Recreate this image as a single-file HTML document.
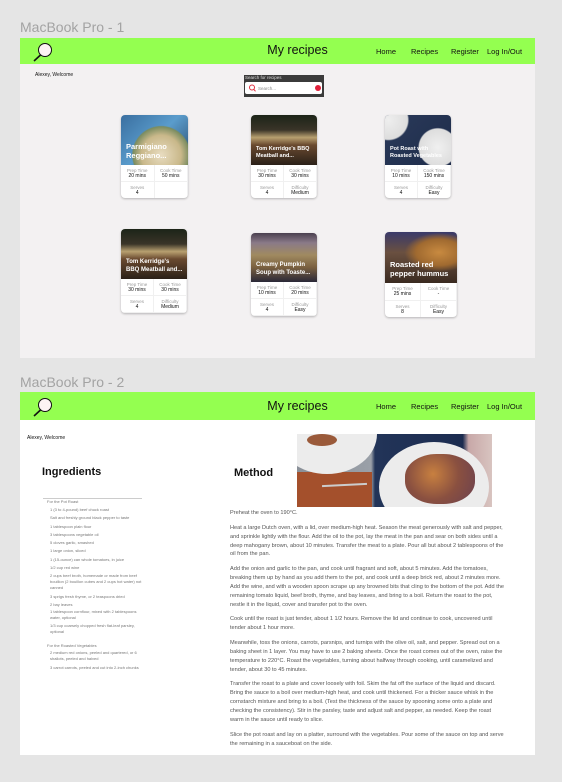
<!DOCTYPE html>
<html><head><meta charset="utf-8"><style>
*{margin:0;padding:0;box-sizing:border-box}
body{width:562px;height:782px;background:#e5e5e5;position:relative;overflow:hidden;font-family:"Liberation Sans",sans-serif;color:#222}
.abs{position:absolute}
.lbl{font-size:14px;color:#a3a3a3;left:20px}
.frame{position:absolute;left:20px;width:515px}
.hdr{position:absolute;left:0;top:0;width:515px;background:#94ff50}
.title{position:absolute;left:0;width:515px;text-align:center;font-size:12.5px;color:#111;padding-left:40px}
.nav{position:absolute;font-size:7.5px;color:#111}
.card{position:absolute;background:#fff;border-radius:4px;overflow:hidden;box-shadow:0 1px 2px rgba(0,0,0,.25)}
.img{position:relative;width:100%}
.img span{position:absolute;left:5px;bottom:5px;right:4px;color:#fff;font-weight:bold;font-size:7px;line-height:8px}
.st{display:grid;grid-template-columns:1fr 1fr;font-size:4.5px;text-align:center}
.st div{height:17px;padding-top:3px;border-right:1px solid #f0f0f0;border-bottom:1px solid #f0f0f0;color:#999;line-height:5.5px}
.st b{display:block;font-weight:normal;color:#111;font-size:5px}
.ing{position:absolute;left:50px;font-size:4px;color:#777;line-height:6px;width:95px}
.m{position:absolute;left:230px;width:274px;font-size:5.6px;line-height:8.9px;color:#555}
.m p{margin-bottom:5.8px}
</style></head><body>
<div class="abs lbl" style="top:19px">MacBook Pro - 1</div>
<div class="frame" style="top:38px;height:320px;background:#f3f1f2">
 <div class="hdr" style="height:26px"></div>
 <svg class="abs" style="left:12px;top:2px" width="24" height="24"><circle cx="13" cy="10" r="6.5" fill="#fdf3f3" stroke="#111" stroke-width="1"/><line x1="8.5" y1="15" x2="2" y2="21" stroke="#111" stroke-width="1.6"/></svg>
 <div class="title" style="top:5px">My recipes</div>
 <div class="nav" style="left:356px;top:9px">Home</div>
 <div class="nav" style="left:391px;top:9px">Recipes</div>
 <div class="nav" style="left:431px;top:9px">Register</div>
 <div class="nav" style="left:467px;top:9px">Log In/Out</div>
 <div class="abs" style="left:15px;top:34px;font-size:5px;color:#111">Alexey, Welcome</div>
 <div class="abs" style="left:224px;top:37px;width:80px;height:22px;background:#3b3b3b">
  <div class="abs" style="left:1px;top:0;font-size:4.5px;color:#ddd">Search for recipes</div>
  <div class="abs" style="left:1px;top:7px;width:77px;height:12px;background:#fff;border-radius:2px">
   <svg class="abs" style="left:3px;top:2px" width="8" height="8"><circle cx="4" cy="3.5" r="2.5" fill="none" stroke="#e03040" stroke-width="1"/><line x1="5.8" y1="5.3" x2="7.5" y2="7.3" stroke="#e03040" stroke-width="1"/></svg>
   <div class="abs" style="left:13px;top:3.5px;font-size:4.5px;color:#888">Search...</div>
   <div class="abs" style="left:70px;top:3px;width:6px;height:6px;border-radius:50%;background:#e0203a"></div>
  </div>
 </div>
 <div class="card" style="left:101px;top:77px;width:67px;height:83px"><div class="img" style="height:50px;background:radial-gradient(circle at 60% 80%,#e8dcc0 0,#c9b88a 35%,#7a8c60 50%,transparent 52%),linear-gradient(135deg,#3a6fa0,#5a9ccc 50%,#2a4a6a)"><span style="font-size:7.5px;line-height:9px">Parmigiano Reggiano...</span></div>
  <div class="st"><div>Prep Time<b>20 mins</b></div><div>Cook Time<b>50 mins</b></div><div>Serves<b>4</b></div><div></div></div></div>
 <div class="card" style="left:231px;top:77px;width:66px;height:83px"><div class="img" style="height:50px;background:linear-gradient(180deg,#1c2418 0,#3a3428 30%,#b8a070 45%,#6a4a30 60%,#2a2018 100%)"><span style="font-size:5.5px;line-height:7px">Tom Kerridge's BBQ Meatball and...</span></div>
  <div class="st"><div>Prep Time<b>30 mins</b></div><div>Cook Time<b>30 mins</b></div><div>Serves<b>4</b></div><div>Difficulty<b>Medium</b></div></div></div>
 <div class="card" style="left:365px;top:77px;width:66px;height:83px"><div class="img" style="height:50px;background:radial-gradient(circle at 80% 65%,#f0f0f0 0,#ddd 30%,transparent 32%),radial-gradient(circle at 5% 10%,#eee 0,#ddd 25%,transparent 27%),linear-gradient(135deg,#2a3a5a,#1e2c4a)"><span style="font-size:5.5px;line-height:7px">Pot Roast with Roasted Vegetables</span></div>
  <div class="st"><div>Prep Time<b>10 mins</b></div><div>Cook Time<b>150 mins</b></div><div>Serves<b>4</b></div><div>Difficulty<b>Easy</b></div></div></div>
 <div class="card" style="left:101px;top:191px;width:66px;height:84px"><div class="img" style="height:50px;background:linear-gradient(180deg,#1c2418 0,#3a3428 30%,#b8a070 45%,#6a4a30 60%,#2a2018 100%)"><span style="font-size:6px;line-height:7.5px">Tom Kerridge's BBQ Meatball and...</span></div>
  <div class="st"><div>Prep Time<b>30 mins</b></div><div>Cook Time<b>30 mins</b></div><div>Serves<b>4</b></div><div>Difficulty<b>Medium</b></div></div></div>
 <div class="card" style="left:231px;top:195px;width:66px;height:83px"><div class="img" style="height:49px;background:linear-gradient(180deg,#4a4050 0,#8a7a88 20%,#a08a60 45%,#7a6040 70%,#2a2838 100%)"><span style="font-size:6px;line-height:7.5px">Creamy Pumpkin Soup with Toaste...</span></div>
  <div class="st"><div>Prep Time<b>10 mins</b></div><div>Cook Time<b>20 mins</b></div><div>Serves<b>4</b></div><div>Difficulty<b>Easy</b></div></div></div>
 <div class="card" style="left:365px;top:194px;width:72px;height:85px"><div class="img" style="height:51px;background:radial-gradient(ellipse at 75% 40%,#c88a40 0,#a06a30 30%,transparent 45%),linear-gradient(180deg,#3a3a6a,#6a5040 40%,#3a2a20)"><span style="font-size:7.5px;line-height:9px">Roasted red pepper hummus</span></div>
  <div class="st"><div style="height:18px">Prep Time<b>25 mins</b></div><div style="height:18px">Cook Time<b>-</b></div><div>Serves<b>8</b></div><div>Difficulty<b>Easy</b></div></div></div>
</div>

<div class="abs lbl" style="top:374px">MacBook Pro - 2</div>
<div class="frame" style="top:392px;height:363px;background:#fff">
 <div class="hdr" style="height:28px"></div>
 <svg class="abs" style="left:12px;top:3px" width="24" height="24"><circle cx="13" cy="10" r="6.5" fill="#fdf3f3" stroke="#111" stroke-width="1"/><line x1="8.5" y1="15" x2="2" y2="21" stroke="#111" stroke-width="1.6"/></svg>
 <div class="title" style="top:7px">My recipes</div>
 <div class="nav" style="left:356px;top:10px">Home</div>
 <div class="nav" style="left:391px;top:10px">Recipes</div>
 <div class="nav" style="left:431px;top:10px">Register</div>
 <div class="nav" style="left:467px;top:10px">Log In/Out</div>
 <div class="abs" style="left:7px;top:43px;font-size:5px;color:#111">Alexey, Welcome</div>
 <div class="abs" style="left:277px;top:42px;width:195px;height:73px;overflow:hidden;background:linear-gradient(90deg,#8a9098 0,#9aa0a8 38%,#223458 40%,#1c2c50 85%,#c8a8a8 88%,#d8c4c0)">
  <div class="abs" style="left:0;top:38px;width:75px;height:40px;background:#a4502c"></div>
  <div class="abs" style="left:-20px;top:-40px;width:100px;height:80px;border-radius:50%;background:#ececec"></div>
  <div class="abs" style="left:10px;top:0;width:30px;height:12px;border-radius:50%;background:#9a5a3a"></div>
  <div class="abs" style="left:82px;top:8px;width:110px;height:90px;border-radius:50%;background:#ececec"></div>
  <div class="abs" style="left:108px;top:20px;width:70px;height:50px;border-radius:45%;background:radial-gradient(circle at 40% 40%,#c88040,#8a5040 50%,#6a4050)"></div>
  <div class="abs" style="left:25px;top:50px;width:45px;height:2px;background:#ccc;transform:rotate(-3deg)"></div>
 </div>
 <div class="abs" style="left:22px;top:74px;font-size:11px;font-weight:bold;color:#111">Ingredients</div>
 <div class="abs" style="left:214px;top:75px;font-size:11px;font-weight:bold;color:#111">Method</div>
 <div class="abs" style="left:23px;top:106px;width:99px;height:1px;background:#ccc"></div>
 <div class="ing" style="left:27px;top:107px">For the Pot Roast</div>
 <div class="ing" style="top:114px;left:30px;line-height:8.3px">1 (3 to 4-pound) beef chuck roast<br>Salt and freshly ground black pepper to taste<br>1 tablespoon plain flour<br>3 tablespoons vegetable oil<br>5 cloves garlic, smashed<br>1 large onion, sliced<br>1 (15-ounce) can whole tomatoes, in juice<br>1/2 cup red wine</div>
 <div class="ing" style="top:181px;left:30px">2 cups beef broth, homemade or made from beef bouillon (2 bouillon cubes and 2 cups hot water) not canned</div>
 <div class="ing" style="top:201px;left:30px;line-height:8.3px">3 sprigs fresh thyme, or 2 teaspoons dried<br>2 bay leaves</div>
 <div class="ing" style="top:217px;left:30px">1 tablespoon cornflour, mixed with 2 tablespoons water, optional</div>
 <div class="ing" style="top:231px;left:30px">1/3 cup coarsely chopped fresh flat-leaf parsley, optional</div>
 <div class="ing" style="top:251px;left:27px">For the Roasted Vegetables</div>
 <div class="ing" style="top:258px;left:30px">2 medium red onions, peeled and quartered, or 6 shallots, peeled and halved</div>
 <div class="ing" style="top:273px;left:30px">3 carrot carrots, peeled and cut into 2-inch chunks</div>
 <div class="m" style="left:210px;top:117px">
 <p>Preheat the oven to 190°C.</p>
 <p>Heat a large Dutch oven, with a lid, over medium-high heat. Season the meat generously with salt and pepper, and sprinkle lightly with the flour. Add the oil to the pot, lay the meat in the pan and sear on both sides until a deep mahogany brown, about 10 minutes. Transfer the meat to a plate. Pour all but about 2 tablespoons of the oil from the pan.</p>
 <p>Add the onion and garlic to the pan, and cook until fragrant and soft, about 5 minutes. Add the tomatoes, breaking them up by hand as you add them to the pot, and cook until a deep brick red, about 2 minutes more. Add the wine, and with a wooden spoon scrape up any browned bits that cling to the bottom of the pot. Add the remaining tomato liquid, beef broth, thyme, and bay leaves, and bring to a boil. Return the roast to the pot, nestle it in the liquid, cover and transfer pot to the oven.</p>
 <p>Cook until the roast is just tender, about 1 1/2 hours. Remove the lid and continue to cook, uncovered until tender about 1 hour more.</p>
 <p>Meanwhile, toss the onions, carrots, parsnips, and turnips with the olive oil, salt, and pepper. Spread out on a baking sheet in 1 layer. You may have to use 2 baking sheets. Once the roast comes out of the oven, raise the temperature to 220°C. Roast the vegetables, turning about halfway through cooking, until caramelized and tender, about 30 to 45 minutes.</p>
 <p>Transfer the roast to a plate and cover loosely with foil. Skim the fat off the surface of the liquid and discard. Bring the sauce to a boil over medium-high heat, and cook until thickened. For a thicker sauce whisk in the cornstarch mixture and bring to a boil. (Test the thickness of the sauce by spooning some onto a plate and checking the consistency). Stir in the parsley, taste and adjust salt and pepper, as needed. Keep the roast warm in the sauce until ready to slice.</p>
 <p>Slice the pot roast and lay on a platter, surround with the vegetables. Pour some of the sauce on top and serve the remaining in a sauceboat on the side.</p>
 </div>
</div>
</body></html>
